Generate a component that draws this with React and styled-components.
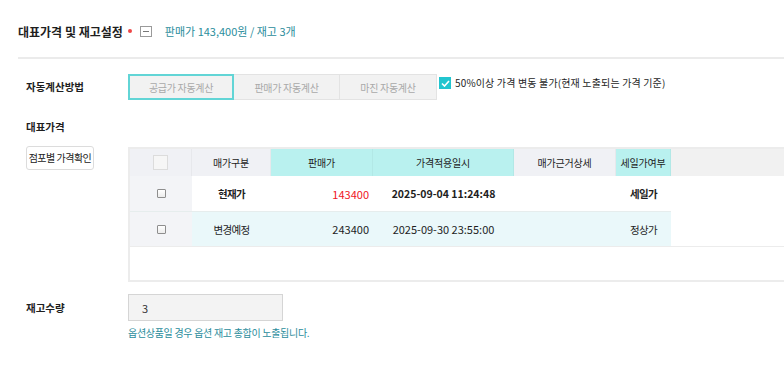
import React from "react";
import styled, { createGlobalStyle } from "styled-components";

const Global = createGlobalStyle`
  html, body { margin: 0; padding: 0; background: #fff; }
  body { font-family: "Noto Sans CJK KR", "Noto Sans", sans-serif; color: #222; overflow: hidden; }
  * { box-sizing: border-box; }
`;

const Page = styled.div`
  width: 784px;
  height: 392px;
  padding-top: 19px;
  overflow: hidden;
`;

const Header = styled.div`
  display: flex;
  align-items: center;
  height: 24px;
  padding-left: 18px;
`;

const Title = styled.h2`
  margin: 0;
  font-size: 12px;
  font-weight: 700;
  letter-spacing: 0;
  color: #1e1e1e;
`;

const RedDot = styled.span`
  width: 4px;
  height: 4px;
  border-radius: 50%;
  background: #ee4646;
  margin-left: 5px;
`;

const ToggleBox = styled.span`
  width: 12px;
  height: 11px;
  margin-left: 8px;
  border: 1px solid #9a9a9a;
  display: flex;
  align-items: center;
  justify-content: center;
  &::after {
    content: "";
    width: 6px;
    height: 1px;
    background: #777;
  }
`;

const Summary = styled.span`
  margin-left: 13px;
  font-size: 11px;
  letter-spacing: 0;
  color: #2b8d9c;
`;

const Divider = styled.div`
  margin: 14px 0 0 18px;
  height: 2px;
  background: #ebebeb;
`;

const Body = styled.div`
  padding-left: 26px;
`;

const Row = styled.div`
  display: flex;
  align-items: ${(p) => p.$align || "center"};
  margin-top: ${(p) => p.$mt || 0}px;
`;

const Label = styled.div`
  width: 102px;
  flex: none;
  font-size: 10.5px;
  font-weight: 700;
  letter-spacing: 0;
  color: #1e1e1e;
  line-height: 16px;
`;

const SectionLabel = styled(Label)`
  margin-top: ${(p) => p.$mt || 0}px;
`;

const SegGroup = styled.div`
  display: flex;
`;

const SegButton = styled.button`
  width: ${(p) => p.$w}px;
  height: 26px;
  padding: 0;
  margin: 0;
  font-family: inherit;
  font-size: 10px;
  letter-spacing: -0.3px;
  color: #a9a9a9;
  background: #f2f2f2;
  border: ${(p) => (p.$active ? "2px solid #62d5d6" : "1px solid #e3e3e3")};
  border-left-width: ${(p) => (p.$first ? (p.$active ? "2px" : "1px") : "0")};
  cursor: pointer;
`;

const CheckRow = styled.label`
  display: flex;
  align-items: flex-start;
  align-self: flex-start;
  margin-left: 2px;
  margin-top: 2px;
  gap: 4px;
  font-size: 10px;
  letter-spacing: 0.15px;
  color: #1e1e1e;
  line-height: 14px;
`;

const TealCheck = styled.span`
  width: 12px;
  height: 12px;
  margin-top: 1px;
  background: #22c5cf;
  display: flex;
  align-items: center;
  justify-content: center;
`;

const SmallButton = styled.button`
  width: 68px;
  height: 24px;
  padding: 0;
  font-family: inherit;
  font-size: 10px;
  letter-spacing: -0.5px;
  color: #222;
  background: #fff;
  border: 1px solid #dcdcdc;
  border-radius: 3px;
`;

const LeftCol = styled.div`
  width: 102px;
  flex: none;
`;

const Table = styled.div`
  flex: 1;
  margin-top: 4px;
  margin-right: -4px;
  display: grid;
  grid-template-columns: 62px 79px 102px 141px 102px 55px 1fr;
  grid-template-rows: 27px 35px 35px 34px;
  border: 2px solid #ececec;
  border-right: none;
`;

const HeadCell = styled.div`
  display: flex;
  align-items: center;
  justify-content: center;
  background: ${(p) => p.$bg};
  border-right: 1px solid rgba(0, 0, 0, 0.035);
  font-size: 10px;
  letter-spacing: -0.2px;
  color: #222;
`;

const Cell = styled.div`
  display: flex;
  align-items: center;
  justify-content: ${(p) => p.$justify || "center"};
  padding: 0 ${(p) => p.$pr || 0}px 0 0;
  background: ${(p) => p.$bg || "transparent"};
  border-top: ${(p) => (p.$line ? "1px solid #e6eded" : "none")};
  font-size: ${(p) => (p.$num ? (p.$bold ? "10.5px" : "11px") : "10.5px")};
  letter-spacing: ${(p) => (p.$num ? "0" : "-0.6px")};
  font-weight: ${(p) => (p.$bold ? 700 : 400)};
  color: ${(p) => p.$color || "#1e1e1e"};
`;

const EmptyFill = styled.div`
  grid-column: 1 / -1;
  border-top: 1px solid #ececec;
  background: #fff;
`;

const HeadBox = styled.span`
  width: 15px;
  height: 15px;
  background: #f6f6f6;
  border: 1px solid #dcdcdc;
`;

const RowBox = styled.span`
  width: 9px;
  height: 9px;
  border: 1px solid #8e8e8e;
  border-radius: 1px;
  background: linear-gradient(#fff, #ececec);
`;

const Input = styled.input`
  width: 155px;
  height: 27px;
  padding: 0 0 0 13px;
  font-family: inherit;
  font-size: 11px;
  color: #333;
  background: #f3f3f3;
  border: 1px solid #d5d5d5;
  outline: none;
`;

const Help = styled.div`
  margin: 5px 0 0 102px;
  font-size: 10px;
  letter-spacing: -0.3px;
  line-height: 14px;
  color: #2b8d9c;
`;

const GRAY = "#f0f1f5";
const TEAL = "#b9f1ef";

const heads = [
  { t: "", bg: GRAY, box: true },
  { t: "매가구분", bg: GRAY },
  { t: "판매가", bg: TEAL },
  { t: "가격적용일시", bg: TEAL },
  { t: "매가근거상세", bg: GRAY },
  { t: "세일가여부", bg: TEAL },
  { t: "", bg: "#f1f1f1" },
];

const rows = [
  { type: "현재가", price: "143400", date: "2025-09-04 11:24:48", sale: "세일가", bold: true, priceColor: "#f0141e", bg: "#fff", line: false },
  { type: "변경예정", price: "243400", date: "2025-09-30 23:55:00", sale: "정상가", bold: false, priceColor: "#1e1e1e", bg: "#eaf8fa", line: true },
];

export default function App() {
  return (
    <Page>
      <Global />
      <Header>
        <Title>대표가격 및 재고설정</Title>
        <RedDot />
        <ToggleBox />
        <Summary>판매가 143,400원 / 재고 3개</Summary>
      </Header>
      <Divider />
      <Body>
        <Row $mt={15}>
          <Label>자동계산방법</Label>
          <SegGroup>
            <SegButton $w={106} $active $first>공급가 자동계산</SegButton>
            <SegButton $w={106}>판매가 자동계산</SegButton>
            <SegButton $w={97}>마진 자동계산</SegButton>
          </SegGroup>
          <CheckRow>
            <TealCheck>
              <svg width="9" height="7" viewBox="0 0 9 7">
                <polyline points="1,3.5 3.5,6 8,1" fill="none" stroke="#fff" strokeWidth="1.6" />
              </svg>
            </TealCheck>
            50%이상 가격 변동 불가(현재 노출되는 가격 기준)
          </CheckRow>
        </Row>
        <SectionLabel $mt={19}>대표가격</SectionLabel>
        <Row $align="flex-start" $mt={8}>
          <LeftCol>
            <SmallButton>점포별 가격확인</SmallButton>
          </LeftCol>
          <Table>
            {heads.map((h, i) => (
              <HeadCell key={i} $bg={h.bg}>
                {h.box ? <HeadBox /> : h.t}
              </HeadCell>
            ))}
            {rows.map((r, i) => (
              <React.Fragment key={i}>
                <Cell $bg="#f3f4f7" $line={r.line}>
                  <RowBox />
                </Cell>
                <Cell $bg={r.bg} $line={r.line} $bold={r.bold}>{r.type}</Cell>
                <Cell $bg={r.bg} $line={r.line} $num $justify="flex-end" $pr={4} $color={r.priceColor}>{r.price}</Cell>
                <Cell $bg={r.bg} $line={r.line} $num $bold={r.bold}>{r.date}</Cell>
                <Cell $bg={r.bg} $line={r.line} />
                <Cell $bg={r.bg} $line={r.line} $bold={r.bold}>{r.sale}</Cell>
                <Cell $bg="#fff" />
              </React.Fragment>
            ))}
            <EmptyFill />
          </Table>
        </Row>
        <Row $mt={12}>
          <Label>재고수량</Label>
          <Input defaultValue="3" readOnly />
        </Row>
        <Help>옵션상품일 경우 옵션 재고 총합이 노출됩니다.</Help>
      </Body>
    </Page>
  );
}
